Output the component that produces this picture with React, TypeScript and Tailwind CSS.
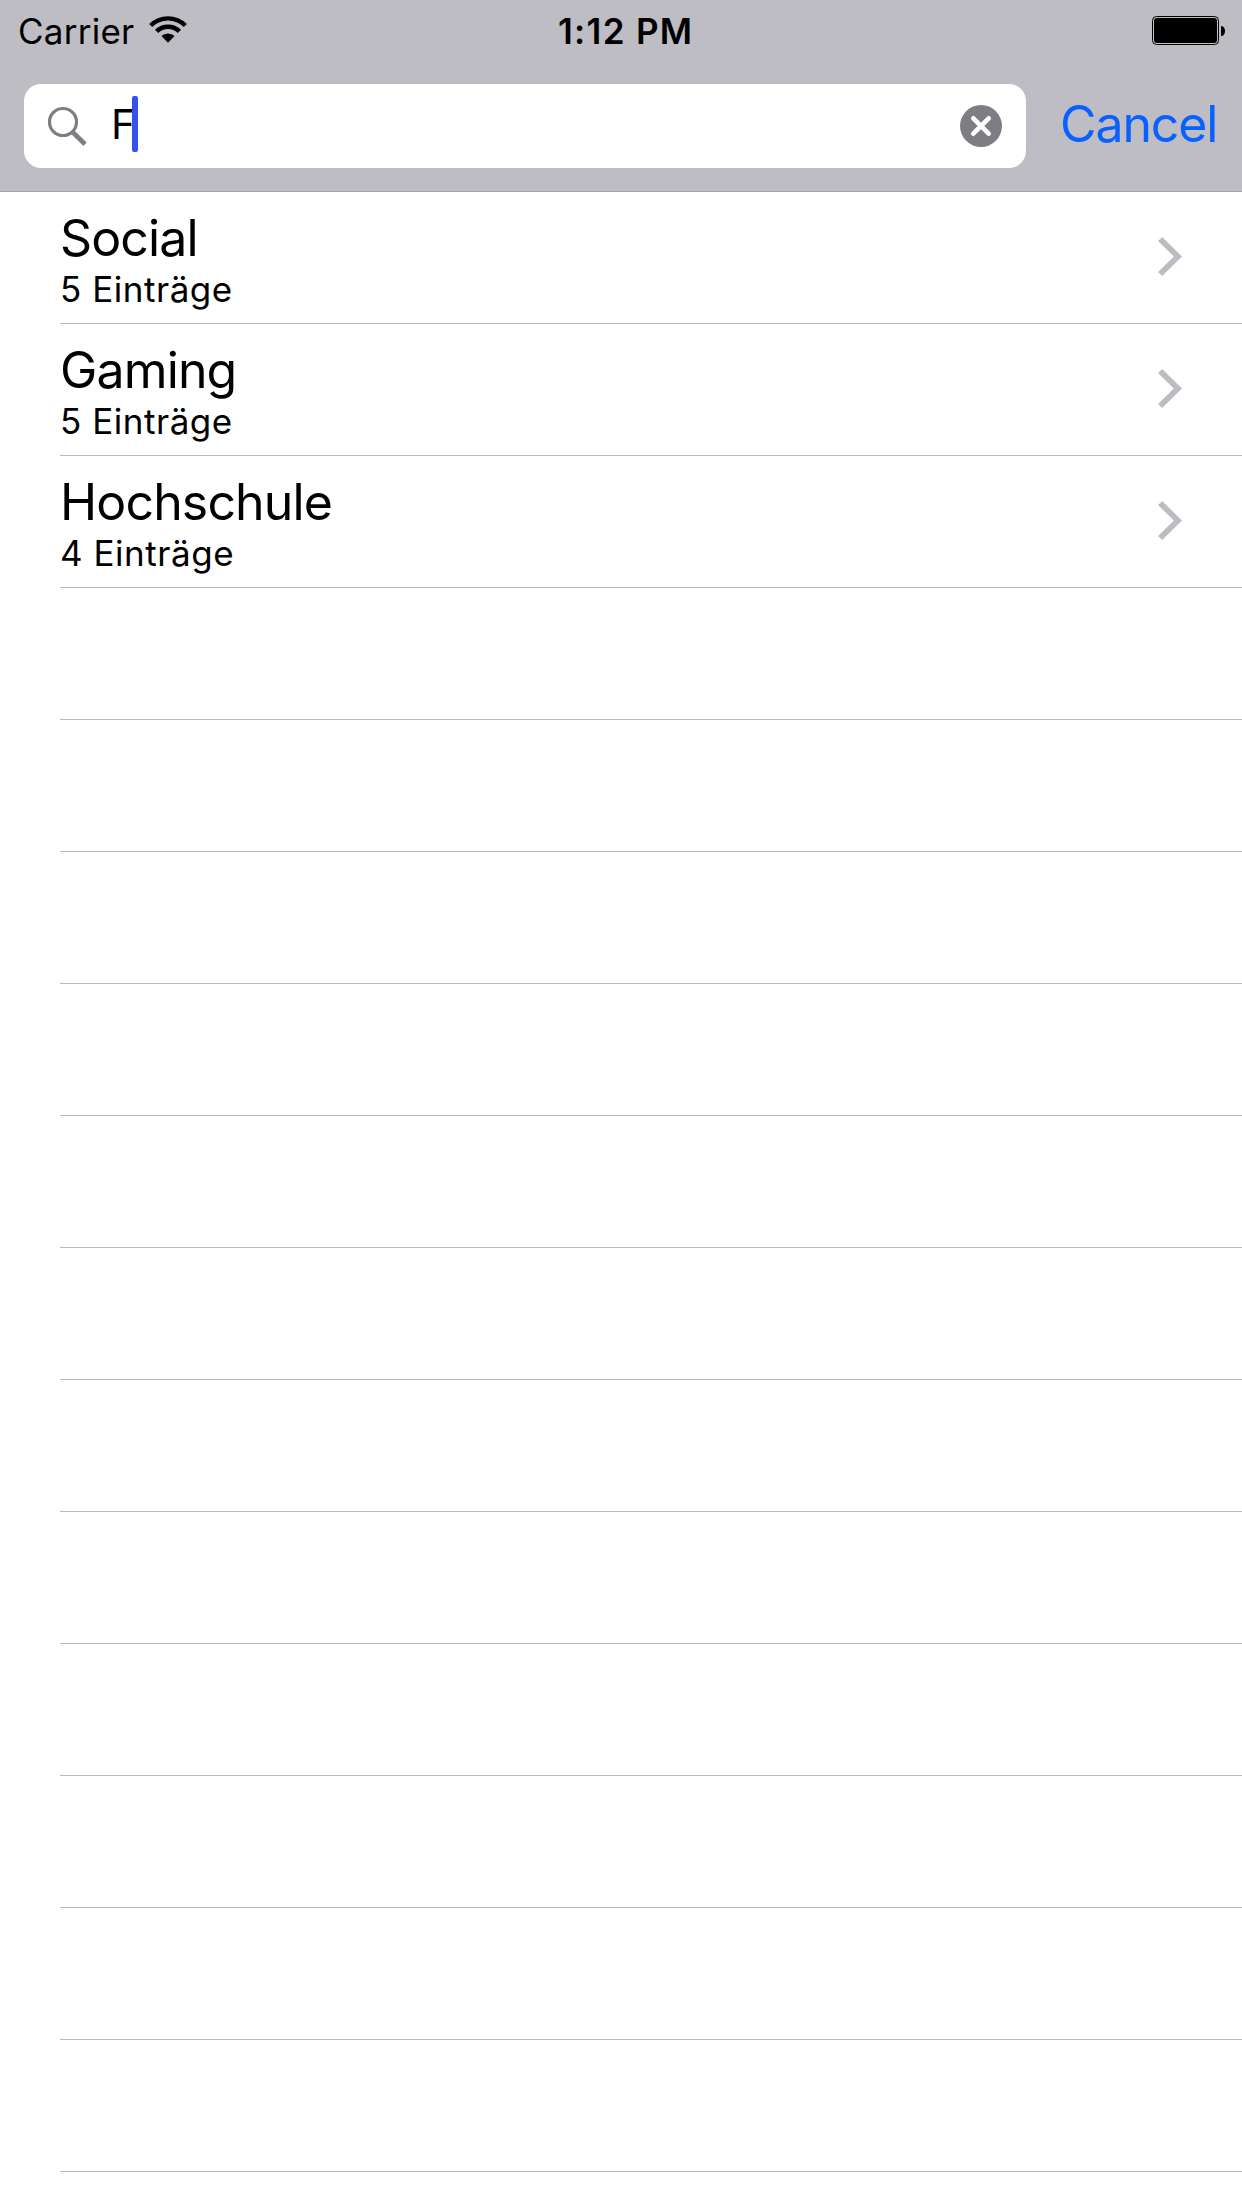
const categories = [
  { title: "Social", detail: "5 Einträge" },
  { title: "Gaming", detail: "5 Einträge" },
  { title: "Hochschule", detail: "4 Einträge" },
];

const emptyRows = Array.from({ length: 12 }, (_, i) => i);

function WifiIcon() {
  return (
    <svg className="mt-4 ml-[15px] h-7 w-[38px]" viewBox="0 0 38 28" fill="none" stroke="#000">
      <path d="M1.7 9.5A24.5 24.5 0 0 1 36.3 9.5" strokeWidth="4.4" />
      <path d="M7.6 15.4A16.2 16.2 0 0 1 30.4 15.4" strokeWidth="4.6" />
      <path d="M12.4 20.1A9.4 9.4 0 0 1 25.6 20.1L19 26.8Z" fill="#000" stroke="none" />
    </svg>
  );
}

function BatteryIcon() {
  return (
    <svg className="mt-4 mr-[17px] ml-auto h-[29px] w-[73px]" viewBox="0 0 73 29">
      <rect x="0.5" y="0.5" width="66" height="28" rx="4" fill="none" stroke="#000" />
      <rect x="2" y="2" width="63" height="25" rx="3" fill="#000" />
      <path d="M69 10C71.5 10 73 12 73 15C73 18 71.5 20 69 20Z" fill="#000" />
    </svg>
  );
}

function StatusBar() {
  return (
    <div className="flex h-[62px] items-start text-[35px] leading-[62px]">
      <div className="flex w-[558px] pl-[18px]">
        <span className="tracking-[0.25px]">Carrier</span>
        <WifiIcon />
      </div>
      <span className="font-semibold tracking-[1.3px]">1:12 PM</span>
      <BatteryIcon />
    </div>
  );
}

function SearchBar() {
  return (
    <div className="mt-[22px] flex h-[84px] items-start pl-6">
      <div className="flex h-[84px] w-[1002px] items-start rounded-[17px] bg-white">
        <svg className="mt-[22px] ml-[23px] h-10 w-10" viewBox="0 0 40 40" fill="none" stroke="#7e7d83">
          <circle cx="16" cy="16" r="13.5" strokeWidth="3.2" />
          <path d="M25.2 25.6L38 38.3" strokeWidth="4.8" />
        </svg>
        <span className="ml-[24px] w-[21px] text-[41px] leading-[80px]">F</span>
        <span className="z-10 mt-3 h-14 w-1.5 rounded-[2px] bg-[#3551ee]" />
        <svg className="mt-[21px] mr-6 ml-auto h-[42px] w-[42px]" viewBox="0 0 42 42">
          <circle cx="21" cy="21" r="21" fill="#7e7d83" />
          <path d="M13.3 13.3L28.7 28.7M28.7 13.3L13.3 28.7" stroke="#fff" strokeWidth="4.6" strokeLinecap="round" />
        </svg>
      </div>
      <span className="ml-[34px] text-[50px] leading-[80px] tracking-[-1.1px] text-[#0a60ff]">Cancel</span>
    </div>
  );
}

function Chevron() {
  return (
    <svg className="mt-[45px] mr-[60px] ml-auto h-[39px] w-6" viewBox="0 0 24 39">
      <path d="M4.2 0L0 4.1L15.8 19.5L0 34.9L4.2 39L24 19.5Z" fill="#bdbcc2" />
    </svg>
  );
}

export default function App() {
  return (
    <div className="h-[2208px] w-[1242px] overflow-hidden bg-white font-['Inter',sans-serif] text-black">
      <header className="h-48 border-b border-[#a6a5aa] bg-[#bebdc3]">
        <StatusBar />
        <SearchBar />
      </header>
      <ul className="pl-[60px]">
        {categories.map((c) => (
          <li key={c.title} className="flex h-[132px] border-b border-[#bababc]">
            <div className="pt-4">
              <div className="text-[50px] leading-[60px] tracking-[-0.85px]">{c.title}</div>
              <div className="text-[35px] leading-[42px] tracking-[0.53px]">{c.detail}</div>
            </div>
            <Chevron />
          </li>
        ))}
        {emptyRows.map((i) => (
          <li key={i} className="h-[132px] border-b border-[#bababc]" />
        ))}
      </ul>
    </div>
  );
}
